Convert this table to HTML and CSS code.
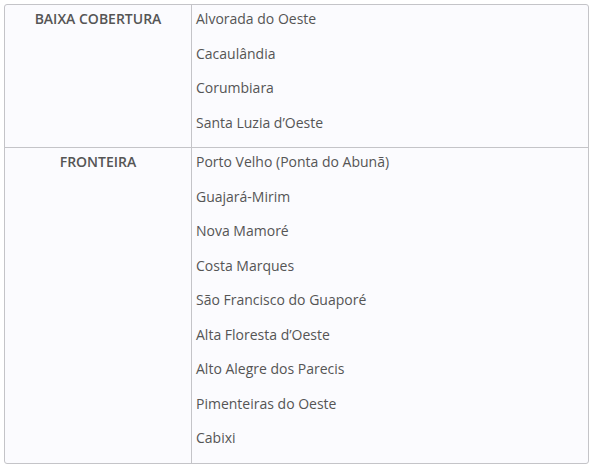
FILE: index.html
```html
<!DOCTYPE html>
<html lang="pt-BR">
<head>
<meta charset="utf-8">
<link rel="stylesheet" href="styles.css">
</head>
<body>
<table class="tbl">
  <tbody>
    <tr>
      <th class="cat">BAIXA COBERTURA</th>
      <td class="list">
        <p>Alvorada do Oeste</p>
        <p>Cacaulândia</p>
        <p>Corumbiara</p>
        <p>Santa Luzia d’Oeste</p>
      </td>
    </tr>
    <tr>
      <th class="cat">FRONTEIRA</th>
      <td class="list">
        <p>Porto Velho (Ponta do Abunã)</p>
        <p>Guajará-Mirim</p>
        <p>Nova Mamoré</p>
        <p>Costa Marques</p>
        <p>São Francisco do Guaporé</p>
        <p>Alta Floresta d’Oeste</p>
        <p>Alto Alegre dos Parecis</p>
        <p>Pimenteiras do Oeste</p>
        <p>Cabixi</p>
      </td>
    </tr>
  </tbody>
</table>
</body>
</html>
```
FILE: styles.css
```css
html, body {
  margin: 0;
  padding: 0;
  background: #ffffff;
}
body {
  padding: 4px;
  font-family: "Open Sans", "Noto Sans", sans-serif;
  font-size: 14px;
  color: #555555;
}
.tbl {
  width: 585px;
  border-collapse: separate;
  border-spacing: 0;
  border: 1px solid #c4c4c8;
  border-radius: 3px;
  background: #fbfbfe;
}
.cat {
  width: 182px;
  padding: 4px 2px 0 2px;
  vertical-align: top;
  text-align: center;
  font-weight: 600;
  line-height: 20px;
  border-right: 1px solid #c4c4c8;
}
.list {
  padding: 4px 4px 0 4px;
  vertical-align: top;
}
tr + tr .cat,
tr + tr .list {
  border-top: 1px solid #c4c4c8;
}
.list p {
  margin: 0 0 14.5px 0;
  line-height: 20px;
}
```
